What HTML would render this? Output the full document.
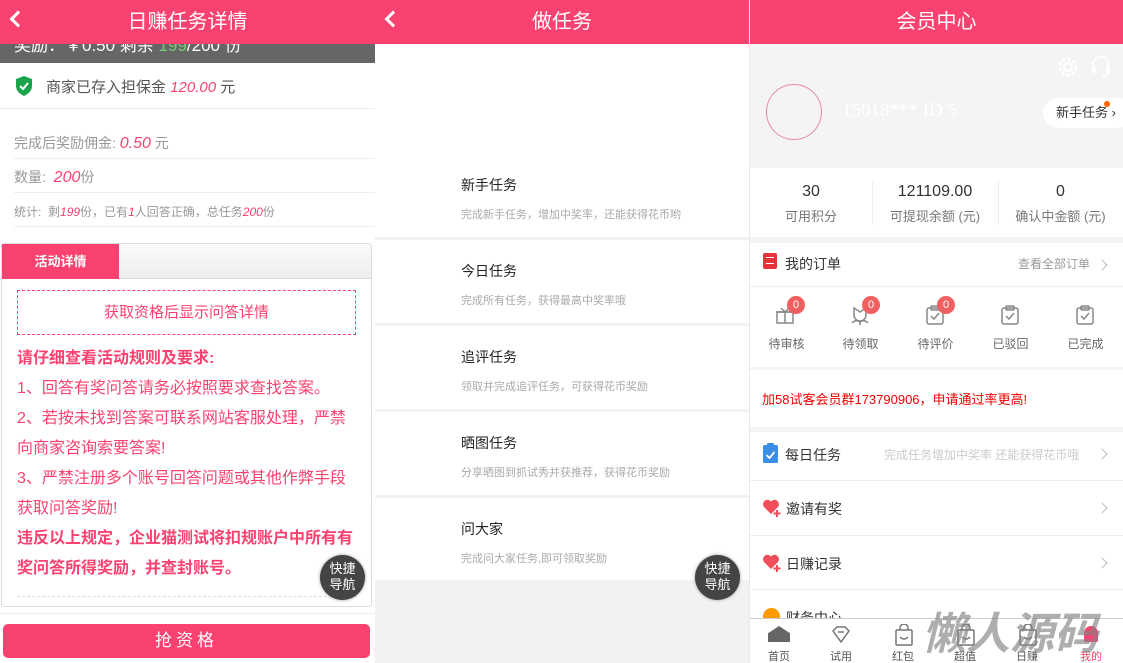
<!DOCTYPE html>
<html><head><meta charset="utf-8"><style>
*{margin:0;padding:0;box-sizing:border-box}
body{width:1123px;height:663px;overflow:hidden;font-family:"Liberation Sans","Noto Sans CJK SC",sans-serif;background:#fff;position:relative}
.p{position:absolute;top:0;height:663px;overflow:hidden}
.hd{position:absolute;left:0;top:0;width:100%;height:44px;background:#f94270;color:#fff;font-size:20px;text-align:center;line-height:44px}
.bk{position:absolute;left:12px;top:13px;width:12px;height:12px;border-left:3px solid #fff;border-bottom:3px solid #fff;transform:rotate(45deg)}
.a{position:absolute;white-space:nowrap}
.pk{color:#f94270;font-style:italic}
.fb{position:absolute;width:45px;height:45px;border-radius:50%;background:#444;color:#fff;font-size:13px;line-height:16px;text-align:center;padding-top:6px;box-shadow:0 0 3px #999}
.chev{position:absolute;width:8px;height:8px;border-right:1.5px solid #bbb;border-top:1.5px solid #bbb;transform:rotate(45deg)}
</style></head><body>

<!-- panel 1 -->
<div class="p" style="left:0;width:375px;background:#fff">
 <div class="a" style="left:0;top:44px;width:375px;height:19px;background:#666"></div>
 <div class="a" style="left:14px;top:31px;color:#fff;font-size:17px">奖励：￥0.50 剩余 <span style="color:#7c7">199</span>/200 份</div>
 <div class="hd">日赚任务详情<div class="bk"></div></div>
 <svg class="a" style="left:15px;top:76px" width="18" height="20" viewBox="0 0 18 20"><path d="M9 0L17 3V10C17 15 13 18 9 20C5 18 1 15 1 10V3Z" fill="#1aa34a"/><path d="M5 10L8 13L13 7" stroke="#fff" stroke-width="2" fill="none"/></svg>
 <div class="a" style="left:46px;top:76px;font-size:15px;color:#555">商家已存入担保金 <span class="pk">120.00</span> 元</div>
 <div class="a" style="left:0;top:108px;width:375px;border-top:1px solid #eee"></div>
 <div class="a" style="left:14px;top:133px;font-size:14px;color:#999">完成后奖励佣金: <span class="pk" style="font-size:16px">0.50</span> 元</div>
 <div class="a" style="left:14px;top:158px;width:361px;border-top:1px solid #eee"></div>
 <div class="a" style="left:14px;top:167px;font-size:14px;color:#999">数量:&nbsp; <span class="pk" style="font-size:16px">200</span>份</div>
 <div class="a" style="left:14px;top:192px;width:361px;border-top:1px solid #eee"></div>
 <div class="a" style="left:14px;top:203px;font-size:12px;color:#999">统计:&nbsp; 剩<span class="pk">199</span>份，已有<span class="pk">1</span>人回答正确，总任务<span class="pk">200</span>份</div>
 <div class="a" style="left:14px;top:226px;width:361px;border-top:1px solid #eee"></div>
 <div class="a" style="left:1px;top:243px;width:371px;height:364px;border:1px solid #ddd;border-radius:3px"></div>
 <div class="a" style="left:2px;top:244px;width:369px;height:35px;background:linear-gradient(#fafafa,#eee);border-bottom:1px solid #ddd"></div>
 <div class="a" style="left:2px;top:244px;width:117px;height:35px;background:#f94270;color:#fff;font-weight:bold;font-size:13px;text-align:center;line-height:35px">活动详情</div>
 <div class="a" style="left:17px;top:290px;width:339px;height:45px;border:1px dashed #f94270;color:#f94270;font-size:15px;text-align:center;line-height:43px">获取资格后显示问答详情</div>
 <div class="a" style="left:17px;top:344px;width:340px;color:#f94270;font-size:16px;line-height:30px;white-space:normal">
  <b>请仔细查看活动规则及要求:</b><br>1、回答有奖问答请务必按照要求查找答案。<br>2、若按未找到答案可联系网站客服处理，严禁向商家咨询索要答案!<br>3、严禁注册多个账号回答问题或其他作弊手段获取问答奖励!<br><b>违反以上规定，企业猫测试将扣规账户中所有有奖问答所得奖励，并查封账号。</b></div>
 <div class="a" style="left:17px;top:596px;width:340px;border-top:1px dashed #ddd"></div>
 <div class="fb" style="left:320px;top:555px">快捷<br>导航</div>
 <div class="a" style="left:0;top:613px;width:375px;border-top:1px solid #eee"></div>
 <div class="a" style="left:3px;top:624px;width:367px;height:34px;background:#f94270;border-radius:5px;color:#fff;font-size:17px;text-align:center;line-height:34px;letter-spacing:4px">抢资格</div>
</div>

<!-- panel 2 -->
<div class="p" style="left:375px;width:375px;background:#f2f2f2;border-right:1px solid #e8e8e8">
 <div class="hd">做任务<div class="bk"></div></div>
 <div class="a" style="left:0;top:44px;width:374px;height:193px;background:#fff"></div>
 <div class="a" style="left:0;top:240px;width:374px;height:83px;background:#fff"></div>
 <div class="a" style="left:0;top:326px;width:374px;height:83px;background:#fff"></div>
 <div class="a" style="left:0;top:412px;width:374px;height:83px;background:#fff"></div>
 <div class="a" style="left:0;top:498px;width:374px;height:82px;background:#fff"></div>
 <div class="a" style="left:86px;top:175px;font-size:14px;color:#222">新手任务</div>
 <div class="a" style="left:86px;top:206px;font-size:11px;color:#aaa">完成新手任务，增加中奖率，还能获得花币哟</div>
 <div class="a" style="left:86px;top:261px;font-size:14px;color:#222">今日任务</div>
 <div class="a" style="left:86px;top:292px;font-size:11px;color:#aaa">完成所有任务，获得最高中奖率哦</div>
 <div class="a" style="left:86px;top:347px;font-size:14px;color:#222">追评任务</div>
 <div class="a" style="left:86px;top:378px;font-size:11px;color:#aaa">领取并完成追评任务，可获得花币奖励</div>
 <div class="a" style="left:86px;top:433px;font-size:14px;color:#222">晒图任务</div>
 <div class="a" style="left:86px;top:464px;font-size:11px;color:#aaa">分享晒图到抓试秀并获推荐，获得花币奖励</div>
 <div class="a" style="left:86px;top:519px;font-size:14px;color:#222">问大家</div>
 <div class="a" style="left:86px;top:550px;font-size:11px;color:#aaa">完成问大家任务,即可领取奖励</div>
 <div class="fb" style="left:320px;top:555px">快捷<br>导航</div>
</div>

<!-- panel 3 -->
<div class="p" style="left:750px;width:373px;background:#f4f4f4">
 <div class="hd">会员中心</div>
 <svg class="a" style="left:307px;top:56px" width="22" height="22" viewBox="0 0 22 22"><circle cx="11" cy="11" r="4" fill="none" stroke="#fff" stroke-width="2"/><circle cx="11" cy="11" r="8" fill="none" stroke="#fff" stroke-width="3" stroke-dasharray="3 2.3"/></svg>
 <svg class="a" style="left:340px;top:55px" width="22" height="24" viewBox="0 0 22 24"><path d="M3 13V10A8 8 0 0 1 19 10V13" fill="none" stroke="#fff" stroke-width="2"/><rect x="2" y="11" width="4" height="7" rx="1" fill="#fff"/><rect x="16" y="11" width="4" height="7" rx="1" fill="#fff"/><path d="M18 18Q17 22 12 22" stroke="#fff" stroke-width="2" fill="none"/></svg>
 <div class="a" style="left:16px;top:84px;width:56px;height:56px;border-radius:50%;border:1px solid #e78aa5"></div>
 <div class="a" style="left:92px;top:100px;font-family:'Liberation Serif',serif;font-size:19px;color:#fff">15018*** ID 5</div>
 <div class="a" style="left:293px;top:98px;width:90px;height:30px;border-radius:15px;background:#fff;font-size:13px;color:#333;line-height:30px;padding-left:13px">新手任务 ›</div>
 <div class="a" style="left:354px;top:101px;width:6px;height:6px;border-radius:50%;background:#f60"></div>
 <div class="a" style="left:0;top:168px;width:373px;height:69px;background:#fff"></div>
 <div class="a" style="left:122px;top:181px;height:44px;border-left:1px solid #eee"></div>
 <div class="a" style="left:248px;top:181px;height:44px;border-left:1px solid #eee"></div>
 <div class="a" style="left:0;top:183px;width:122px;text-align:center;font-size:16px;color:#333">30</div>
 <div class="a" style="left:0;top:206px;width:122px;text-align:center;font-size:13px;color:#777">可用积分</div>
 <div class="a" style="left:122px;top:183px;width:126px;text-align:center;font-size:16px;color:#333">121109.00</div>
 <div class="a" style="left:122px;top:206px;width:126px;text-align:center;font-size:13px;color:#777">可提现余额 (元)</div>
 <div class="a" style="left:248px;top:183px;width:125px;text-align:center;font-size:16px;color:#333">0</div>
 <div class="a" style="left:248px;top:206px;width:125px;text-align:center;font-size:13px;color:#777">确认中金额 (元)</div>
 <div class="a" style="left:0;top:243px;width:373px;height:124px;background:#fff"></div>
 <div class="a" style="left:13px;top:253px;width:14px;height:16px;background:#e8333a;border-radius:2px"></div>
 <div class="a" style="left:16px;top:257px;width:8px;border-top:1.5px solid #fff;height:7px;border-bottom:1.5px solid #fff"></div>
 <div class="a" style="left:35px;top:254px;font-size:14px;color:#333">我的订单</div>
 <div class="a" style="left:268px;top:255px;font-size:12px;color:#999">查看全部订单</div>
 <div class="chev" style="left:348px;top:261px"></div>
 <div class="a" style="left:0;top:286px;width:373px;border-top:1px solid #eee"></div>
 <svg class="a" style="left:24px;top:304px" width="22" height="22" viewBox="0 0 22 22"><g fill="none" stroke="#888" stroke-width="1.5"><rect x="3" y="8" width="16" height="11"/><path d="M2 8H20M11 8V19M7 4L11 8L15 4"/></g></svg>
 <svg class="a" style="left:99px;top:304px" width="22" height="22" viewBox="0 0 22 22"><g fill="none" stroke="#888" stroke-width="1.5"><path d="M5 4L11 8L17 4V11A6 6 0 0 1 5 11Z"/><path d="M11 17V21M3 19Q7 15 11 18Q15 15 19 19"/></g></svg>
 <svg class="a" style="left:174px;top:304px" width="22" height="22" viewBox="0 0 22 22"><g fill="none" stroke="#888" stroke-width="1.5"><rect x="3" y="4" width="16" height="16" rx="2"/><rect x="7" y="2" width="8" height="4" rx="1"/><path d="M7 12L10 15L15 9"/></g></svg>
 <svg class="a" style="left:249px;top:304px" width="22" height="22" viewBox="0 0 22 22"><g fill="none" stroke="#888" stroke-width="1.5"><rect x="3" y="4" width="16" height="16" rx="2"/><rect x="7" y="2" width="8" height="4" rx="1"/><path d="M7 12L10 15L15 9"/></g></svg>
 <svg class="a" style="left:324px;top:304px" width="22" height="22" viewBox="0 0 22 22"><g fill="none" stroke="#888" stroke-width="1.5"><rect x="3" y="4" width="16" height="16" rx="2"/><rect x="7" y="2" width="8" height="4" rx="1"/><path d="M7 12L10 15L15 9"/></g></svg>
 <div class="a" style="left:37px;top:296px;width:18px;height:18px;border-radius:50%;background:#f06060;color:#fff;font-size:11px;text-align:center;line-height:18px">0</div>
 <div class="a" style="left:112px;top:296px;width:18px;height:18px;border-radius:50%;background:#f06060;color:#fff;font-size:11px;text-align:center;line-height:18px">0</div>
 <div class="a" style="left:187px;top:296px;width:18px;height:18px;border-radius:50%;background:#f06060;color:#fff;font-size:11px;text-align:center;line-height:18px">0</div>
 <div class="a" style="left:0;top:335px;width:73px;text-align:center;font-size:12px;color:#666">待审核</div>
 <div class="a" style="left:73px;top:335px;width:75px;text-align:center;font-size:12px;color:#666">待领取</div>
 <div class="a" style="left:148px;top:335px;width:75px;text-align:center;font-size:12px;color:#666">待评价</div>
 <div class="a" style="left:223px;top:335px;width:75px;text-align:center;font-size:12px;color:#666">已驳回</div>
 <div class="a" style="left:298px;top:335px;width:75px;text-align:center;font-size:12px;color:#666">已完成</div>
 <div class="a" style="left:0;top:370px;width:373px;height:57px;background:#fff"></div>
 <div class="a" style="left:12px;top:389px;font-size:13px;color:#e00">加58试客会员群173790906，申请通过率更高!</div>
 <div class="a" style="left:0;top:432px;width:373px;height:186px;background:#fff"></div>
 <svg class="a" style="left:13px;top:443px" width="15" height="20" viewBox="0 0 15 20"><rect x="0" y="2" width="15" height="18" rx="1.5" fill="#3a8ee6"/><rect x="4" y="0" width="7" height="4" rx="1" fill="#3a8ee6"/><path d="M3.5 12L6.5 15L11.5 9" stroke="#fff" stroke-width="1.8" fill="none"/></svg>
 <div class="a" style="left:35px;top:445px;font-size:14px;color:#333">每日任务</div>
 <div class="a" style="left:134px;top:446px;font-size:12px;color:#ccc">完成任务增加中奖率 还能获得花币哦</div>
 <div class="chev" style="left:348px;top:450px"></div>
 <div class="a" style="left:0;top:480px;width:373px;border-top:1px solid #eee"></div>
 <svg class="a" style="left:12px;top:498px" width="20" height="20" viewBox="0 0 20 20"><path d="M9 16L2 9A4 4 0 0 1 9 3.5A4 4 0 0 1 16 9Z" fill="#f04e5a"/><path d="M15 12V19M11.5 15.5H18.5" stroke="#f04e5a" stroke-width="2"/></svg>
 <div class="a" style="left:36px;top:499px;font-size:14px;color:#333">邀请有奖</div>
 <div class="chev" style="left:348px;top:504px"></div>
 <div class="a" style="left:0;top:535px;width:373px;border-top:1px solid #eee"></div>
 <svg class="a" style="left:12px;top:553px" width="20" height="20" viewBox="0 0 20 20"><path d="M9 16L2 9A4 4 0 0 1 9 3.5A4 4 0 0 1 16 9Z" fill="#f04e5a"/><path d="M15 12V19M11.5 15.5H18.5" stroke="#f04e5a" stroke-width="2"/></svg>
 <div class="a" style="left:36px;top:554px;font-size:14px;color:#333">日赚记录</div>
 <div class="chev" style="left:348px;top:559px"></div>
 <div class="a" style="left:0;top:589px;width:373px;border-top:1px solid #eee"></div>
 <div class="a" style="left:13px;top:608px;width:17px;height:17px;border-radius:50%;background:#f90"></div>
 <div class="a" style="left:36px;top:608px;font-size:14px;color:#333">财务中心</div>
 <div class="a" style="left:0;top:618px;width:373px;height:45px;background:#fff;border-top:1px solid #ccc"></div>
 <div class="a" style="left:18px;top:626px;width:22px;height:16px;background:#666;clip-path:polygon(50% 0,100% 45%,100% 100%,0 100%,0 45%)"></div>
 <div class="a" style="left:0;top:648px;width:58px;text-align:center;font-size:11px;color:#555">首页</div>
 <div class="a" style="left:62px;top:648px;width:58px;text-align:center;font-size:11px;color:#555">试用</div>
 <div class="a" style="left:124px;top:648px;width:58px;text-align:center;font-size:11px;color:#555">红包</div>
 <div class="a" style="left:186px;top:648px;width:58px;text-align:center;font-size:11px;color:#555">超值</div>
 <div class="a" style="left:248px;top:648px;width:58px;text-align:center;font-size:11px;color:#555">日赚</div>
 <div class="a" style="left:312px;top:648px;width:58px;text-align:center;font-size:11px;color:#f94270">我的</div>
 <svg class="a" style="left:81px;top:626px" width="20" height="18" viewBox="0 0 20 18"><path d="M2 5L6 1H14L18 5L10 16Z" fill="none" stroke="#777" stroke-width="1.5"/><path d="M7 6H13" stroke="#777" stroke-width="1.5"/></svg>
 <svg class="a" style="left:144px;top:624px" width="20" height="22" viewBox="0 0 20 22"><g fill="none" stroke="#777" stroke-width="1.5"><rect x="2" y="6" width="16" height="15" rx="1"/><path d="M6 6V4A4 4 0 0 1 14 4V6M6 13Q10 17 14 13"/></g></svg>
 <svg class="a" style="left:206px;top:624px" width="20" height="22" viewBox="0 0 20 22"><g fill="none" stroke="#777" stroke-width="1.5"><rect x="2" y="6" width="16" height="15" rx="1"/><path d="M6 6V4A4 4 0 0 1 14 4V6M6 13Q10 17 14 13"/></g></svg>
 <svg class="a" style="left:268px;top:624px" width="20" height="22" viewBox="0 0 20 22"><g fill="none" stroke="#777" stroke-width="1.5"><rect x="2" y="6" width="16" height="15" rx="1"/><path d="M6 6V4A4 4 0 0 1 14 4V6M6 13Q10 17 14 13"/></g></svg>
 <div class="a" style="left:334px;top:626px;width:14px;height:16px;background:#f94270;border-radius:7px 7px 2px 2px"></div>
 <div class="a" style="left:172px;top:598px;font-size:44px;font-weight:bold;font-style:italic;color:rgba(130,130,130,0.65)">懒人源码</div>
</div>
</body></html>
